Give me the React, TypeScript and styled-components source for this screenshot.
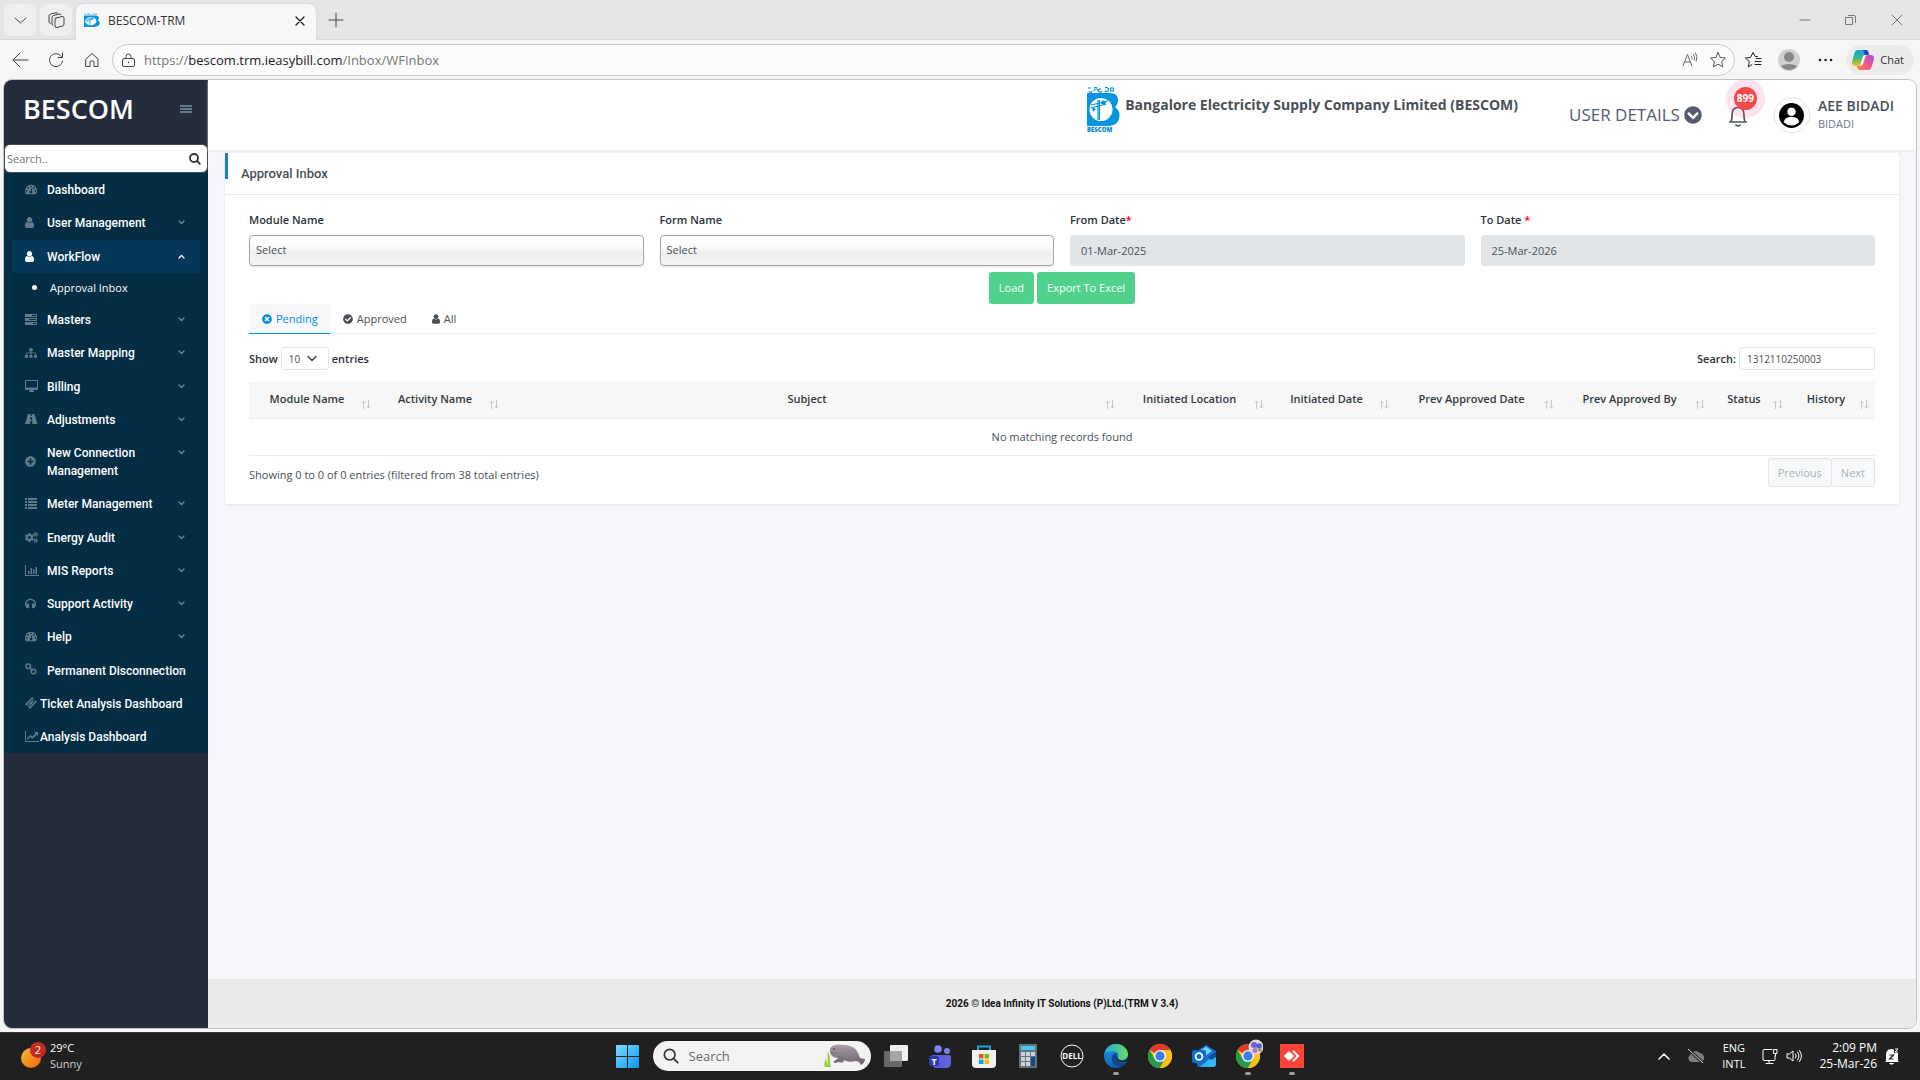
import React from 'react';
import styled, { createGlobalStyle } from 'styled-components';
import { FaSitemap, FaPlusCircle, FaCogs, FaHeadphones, FaTimesCircle, FaCheckCircle, FaChevronCircleDown } from 'react-icons/fa';

const Global = createGlobalStyle`
  * { box-sizing: border-box; }
  html, body { margin: 0; }
  body { font: 400 11px/18px "Open Sans", "Noto Sans", sans-serif; color: #495057; background: #f6f6f6; }
  button, input, select { font: inherit; color: inherit; margin: 0; }
  button { border: 0; padding: 0; background: none; }
  a { color: inherit; text-decoration: none; }
  svg { display: block; flex: none; }
`;

const Screen = styled.div`
  display: flex;
  flex-direction: column;
  min-height: 100vh;
`;

/* ---------- browser chrome ---------- */
const TabStrip = styled.div`
  display: flex;
  align-items: flex-start;
  height: 40px;
  padding: 4px 0 0 4px;
  background: #e5e5e5;
  border-bottom: 1px solid #dadada;
`;
const StripButton = styled.button<{ $plain?: boolean }>`
  display: grid;
  place-items: center;
  width: 32px;
  height: 32px;
  margin-right: 4px;
  border-radius: 8px;
  background: ${p => (p.$plain ? 'transparent' : '#eeeeee')};
`;
const BrowserTab = styled.div`
  display: flex;
  align-items: center;
  gap: 8px;
  width: 240px;
  height: 36px;
  padding: 0 8px 2px;
  margin-right: 4px;
  border-radius: 8px 8px 0 0;
  background: #f7f7f7;
  box-shadow: 0 0 2px #c4c4c4;
  clip-path: inset(-2px -2px 0 -2px);
  font-size: 12px;
  color: #333;
`;
const TabTitle = styled.span`
  flex: 1;
`;
const CloseTab = styled.button`
  display: grid;
  place-items: center;
  width: 16px;
  height: 16px;
`;
const WindowButtons = styled.div`
  display: flex;
  margin-left: auto;
`;
const WindowButton = styled.button`
  display: grid;
  place-items: center;
  width: 46px;
  height: 32px;
`;
const Toolbar = styled.div`
  display: flex;
  align-items: center;
  height: 39px;
  padding: 1px 6px 0 2px;
  background: #f6f6f6;
`;
const ToolButton = styled.button`
  display: grid;
  place-items: center;
  width: 36px;
  height: 32px;
`;
const AddressBar = styled.div`
  display: flex;
  align-items: center;
  flex: 1;
  height: 32px;
  margin-left: 2px;
  padding: 0 2px 0 8px;
  border: 1px solid #cacaca;
  border-radius: 16px;
  background: #fcfcfc;
`;
const Url = styled.span`
  flex: 1;
  margin-left: 8px;
  font-size: 13px;
  color: #767676;
  b { font-weight: 400; color: #1b1b1b; }
`;
const AddressButton = styled.button`
  display: grid;
  place-items: center;
  width: 28px;
  height: 28px;
`;
const ChatButton = styled.button`
  display: flex;
  align-items: center;
  gap: 6px;
  height: 30px;
  margin-left: 3px;
  padding: 0 10px 0 6px;
  border-radius: 15px;
  background: #ebebeb;
  font-size: 11px;
  color: #333;
`;

/* ---------- page frame ---------- */
const Frame = styled.div`
  display: flex;
  flex: 1;
  margin: 0 3px 3px;
  border: 1px solid #c2c2c2;
  border-radius: 9px;
  overflow: hidden;
  background: #f6f7fa;
`;
const Sidebar = styled.aside`
  width: 204px;
  flex: none;
  background: #242c3d;
`;
const Brand = styled.div`
  display: flex;
  align-items: center;
  justify-content: space-between;
  height: 64px;
  padding: 0 16px 6px 19px;
  font-size: 27px;
  font-weight: 600;
  color: #fff;
`;
const SideSearch = styled.label`
  display: flex;
  align-items: center;
  height: 29px;
  padding: 0 6px 0 2px;
  border: 1px solid #4b4b50;
  border-radius: 6px;
  background: #fff;
`;
const SideSearchInput = styled.input`
  flex: 1;
  min-width: 0;
  border: 0;
  padding: 0;
  outline: 0;
  background: none;
  &::placeholder { color: #757575; opacity: 1; }
`;
const Menu = styled.nav`
  display: flex;
  flex-direction: column;
  justify-content: space-between;
  min-height: 580px;
  padding: 0 8px;
  background: #032c45;
  font-family: Roboto, sans-serif;
  font-size: 12px;
  font-weight: 500;
`;
const MenuItem = styled.a<{ $active?: boolean; $tight?: boolean }>`
  display: flex;
  align-items: center;
  gap: ${p => (p.$tight ? 1 : 8)}px;
  min-height: 33px;
  padding: 0 15px 0 13px;
  border-radius: 3px;
  color: #fff;
  background: ${p => (p.$active ? '#053857' : 'transparent')};
`;
const MenuIcon = styled.span<{ $active?: boolean }>`
  width: 14px;
  flex: none;
  color: ${p => (p.$active ? '#fff' : '#5f7b8d')};
`;
const MenuText = styled.span`
  flex: 1;
  min-width: 0;
  padding: 8px 0 7px;
  white-space: nowrap;
`;
const MenuArrow = styled.span<{ $active?: boolean }>`
  display: flex;
  align-items: center;
  align-self: flex-start;
  height: 33px;
  margin-left: -8px;
  color: ${p => (p.$active ? '#fff' : '#6d8797')};
`;
const SubItem = styled.a`
  display: flex;
  align-items: center;
  gap: 13px;
  height: 30px;
  padding-left: 20px;
  color: #fff;
  font: 400 11px/18px "Open Sans", sans-serif;
  &::before { content: ''; width: 5px; height: 5px; border-radius: 50%; background: #fff; }
`;

const Content = styled.div`
  display: flex;
  flex-direction: column;
  flex: 1;
  min-width: 0;
`;
const Header = styled.header`
  display: flex;
  justify-content: flex-end;
  height: 70px;
  padding-right: 22px;
  background: #fff;
  box-shadow: 0 1px 2px #dfe2e6;
`;
const Company = styled.div`
  display: flex;
  gap: 5px;
  margin-right: 51px;
  padding-top: 6px;
  font-size: 14px;
  font-weight: 700;
  line-height: 38px;
  white-space: nowrap;
`;
const UserDetails = styled.button`
  display: flex;
  align-items: center;
  gap: 4px;
  font-size: 17px;
  color: #555b6d;
`;
const Bell = styled.button`
  position: relative;
  display: grid;
  place-items: center;
  width: 26px;
  margin: 0 23px;
  padding-top: 2px;
  color: #4e566b;
`;
const BellBadge = styled.span`
  position: absolute;
  top: 7px;
  left: 9px;
  width: 23px;
  height: 23px;
  border-radius: 50%;
  background: #f44a4a;
  box-shadow: 0 0 0 8px rgba(240, 70, 140, 0.15);
  font-size: 10px;
  font-weight: 700;
  line-height: 22px;
  text-align: center;
  color: #fff;
`;
const Avatar = styled.span`
  display: grid;
  place-items: center;
  align-self: center;
  width: 36px;
  height: 36px;
  margin-right: 8px;
  border: 1px solid #e2e4e8;
  border-radius: 50%;
`;
const UserName = styled.div`
  align-self: center;
  color: #74788d;
  strong { display: block; font-size: 14px; font-weight: 600; color: #495057; }
`;
const Main = styled.main`
  flex: 1;
  padding: 3px 17px 16px;
`;
const Card = styled.section`
  border-radius: 3px;
  background: #fff;
  box-shadow: 0 1px 3px #dfe2e6;
`;
const CardHeader = styled.div`
  display: flex;
  height: 42px;
  border-bottom: 1px solid #ebebed;
  &::before { content: ''; width: 3px; height: 26px; background: #1b82bd; }
`;
const CardTitle = styled.h1`
  margin: 0;
  padding-left: 13px;
  font: 500 13px/41px Roboto, sans-serif;
  color: #495057;
`;
const CardBody = styled.div`
  padding: 16px 24px 17px;
`;
const Filters = styled.div`
  display: grid;
  grid-template-columns: repeat(4, 1fr);
  gap: 16px;
`;
const Field = styled.div`
  display: flex;
  flex-direction: column;
  gap: 6px;
`;
const Label = styled.label`
  font-weight: 600;
  color: #2c3238;
  i { font-style: normal; color: #f00; }
`;
const Picker = styled.select`
  appearance: none;
  height: 31px;
  padding: 0 6px 2px;
  border: 1px solid #a5a5a5;
  border-radius: 4px;
  background: linear-gradient(#fff 20%, #f6f6f6 50%, #eee 52%, #f4f4f4 100%);
  box-shadow: 0 1px 1px #e4e4e4;
`;
const DateInput = styled.input`
  height: 31px;
  width: 100%;
  padding: 0 10px;
  border: 1px solid #e1e5e8;
  border-radius: 3px;
  background: #e1e5e8;
`;
const Actions = styled.div`
  display: flex;
  justify-content: center;
  gap: 3px;
  padding-top: 6px;
`;
const GreenButton = styled.button`
  height: 32px;
  padding: 0 10px;
  border-radius: 3px;
  background: #51d28c;
  color: #fff;
`;
const Tabs = styled.div`
  display: flex;
  height: 30px;
  border-bottom: 1px solid #ebedf0;
`;
const Tab = styled.button<{ $active?: boolean }>`
  display: flex;
  align-items: center;
  gap: 4px;
  height: 30px;
  padding: 0 12px 0 13px;
  border-bottom: 1px solid ${p => (p.$active ? '#038edc' : 'transparent')};
  background: ${p => (p.$active ? '#f6f8fa' : 'transparent')};
  color: ${p => (p.$active ? '#038edc' : '#495057')};
  font-weight: 500;
`;
const TableTools = styled.div`
  display: flex;
  justify-content: space-between;
  margin: 13px 0 11px;
`;
const ToolLabel = styled.label`
  display: flex;
  align-items: center;
  gap: 3px;
  height: 23px;
  font-weight: 600;
  color: #2c3238;
`;
const SelectWrap = styled.span`
  display: grid;
  align-items: center;
  > * { grid-area: 1 / 1; }
  svg { justify-self: end; margin-right: 12px; pointer-events: none; }
`;
const SmallSelect = styled.select`
  appearance: none;
  width: 48px;
  height: 23px;
  padding: 0 7px;
  border: 1px solid #e2e5e8;
  border-radius: 3px;
  background: #fff;
  font-size: 10px;
  font-weight: 400;
  color: #495057;
`;
const SmallInput = styled.input`
  width: 136px;
  height: 23px;
  padding: 0 7px;
  border: 1px solid #e2e5e8;
  border-radius: 3px;
  font-size: 10px;
  font-weight: 400;
  color: #495057;
`;
const Table = styled.table`
  width: 100%;
  table-layout: fixed;
  border-collapse: separate;
  border-spacing: 0;
`;
const Th = styled.th<{ $width?: number }>`
  position: relative;
  width: ${p => (p.$width ? p.$width + 'px' : 'auto')};
  height: 38px;
  padding: 0 25px 1px 13px;
  border-bottom: 1px solid #ebedf0;
  background: #f7f7f7;
  font-weight: 600;
  color: #343a40;
  white-space: nowrap;
  svg { position: absolute; right: 6px; bottom: 9px; }
`;
const EmptyCell = styled.td`
  height: 37px;
  padding: 0;
  border-bottom: 1px solid #ebedf0;
  text-align: center;
`;
const TableFooter = styled.div`
  display: flex;
  justify-content: space-between;
  align-items: center;
  margin-top: 2px;
  height: 29px;
`;
const Info = styled.span`
  padding-top: 4px;
`;
const Pager = styled.div`
  display: flex;
`;
const PageButton = styled.button`
  height: 29px;
  padding: 0 9px;
  border: 1px solid #e2e5e8;
  border-radius: 3px;
  background: #f8f9fb;
  color: #abb1b8;
  & + & { margin-left: -1px; }
`;
const PageFooter = styled.footer`
  height: 49px;
  background: #eaeaea;
  font: 700 10px/49px Roboto, sans-serif;
  text-align: center;
  color: #111;
`;

/* ---------- taskbar ---------- */
const Taskbar = styled.div`
  display: grid;
  grid-template-columns: 1fr auto 1fr;
  align-items: center;
  height: 48px;
  padding: 0 21px 1px 20px;
  border-top: 1px solid #3c3c3c;
  background: #202020;
  color: #fff;
`;
const Weather = styled.button`
  display: flex;
  align-items: center;
  gap: 4px;
  text-align: left;
  line-height: 16px;
  span { display: block; color: #cfcfcf; }
`;
const Apps = styled.div`
  display: flex;
  align-items: center;
`;
const AppButton = styled.button<{ $running?: boolean }>`
  display: grid;
  place-items: center;
  position: relative;
  width: 44px;
  height: 46px;
  &::after {
    content: '';
    display: ${p => (p.$running ? 'block' : 'none')};
    position: absolute;
    bottom: 4px;
    width: 6px;
    height: 3px;
    border-radius: 2px;
    background: #9d9d9d;
  }
`;
const TaskSearch = styled.label`
  display: flex;
  align-items: center;
  gap: 10px;
  width: 218px;
  height: 30px;
  margin: 0 3px;
  padding: 0 5px 0 10px;
  border-radius: 15px;
  background: #f3f3f3;
`;
const TaskSearchInput = styled.input`
  flex: 1;
  min-width: 0;
  padding: 0;
  border: 0;
  outline: 0;
  background: none;
  font-size: 13px;
  &::placeholder { color: #686868; opacity: 1; }
`;
const Tray = styled.div`
  display: flex;
  align-items: center;
  justify-content: flex-end;
`;
const TrayButton = styled.button<{ $gap?: number }>`
  margin-right: ${p => p.$gap || 0}px;
  line-height: 16px;
  text-align: center;
`;
const Clock = styled.button`
  margin: 0 8px 0 16px;
  font-size: 12px;
  line-height: 16px;
  text-align: right;
`;

/* ---------- icons ---------- */
const Line = ({ d, w = 16, h = w, s = 1, c = '#444' }: { d: string; w?: number; h?: number; s?: number; c?: string }) => (
  <svg width={w} height={h} viewBox={`0 0 ${w} ${h}`} fill="none" stroke={c} strokeWidth={s} strokeLinecap="round" strokeLinejoin="round"><path d={d} /></svg>
);
const UserIcon = ({ size = 12 }: { size?: number }) => (
  <svg width={Math.round(size * 0.8)} height={size} viewBox="0 128 1280 1536" fill="currentColor">
    <path d="M1280 1399q0 109-62.5 187t-150.5 78H213Q125 1664 62.5 1586T0 1399q0-85 8.5-160.5T40 1086.5t58.5-131 94-89T327 832q131 128 313 128t313-128q76 0 134.5 34.5t94 89 58.5 131 31.5 152.5 8.5 160.5zm-256-887q0 159-112.5 271.5T640 896 368.5 783.5 256 512t112.5-271.5T640 128t271.5 112.5T1024 512z" />
  </svg>
);
const GaugeIcon = () => (
  <svg width="12" height="11" viewBox="0 192 1792 1536" fill="currentColor">
    <path d="M384 1152q0-53-37.5-90.5T256 1024t-90.5 37.5T128 1152t37.5 90.5T256 1280t90.5-37.5T384 1152zm192-448q0-53-37.5-90.5T448 576t-90.5 37.5T320 704t37.5 90.5T448 832t90.5-37.5T576 704zm428 481l101-382q6-26-7.5-48.5T1059 725t-48 6.5-30 39.5l-101 382q-60 5-107 43.5t-63 98.5q-20 77 20 146t117 89 146-20 89-117q16-60-6-117t-72-91zm660-33q0-53-37.5-90.5T1536 1024t-90.5 37.5-37.5 90.5 37.5 90.5 90.5 37.5 90.5-37.5 37.5-90.5zM1024 512q0-53-37.5-90.5T896 384t-90.5 37.5T768 512t37.5 90.5T896 640t90.5-37.5T1024 512zm448 192q0-53-37.5-90.5T1344 576t-90.5 37.5T1216 704t37.5 90.5T1344 832t90.5-37.5T1472 704zm320 448q0 261-141 483-19 29-54 29H195q-35 0-54-29Q0 1414 0 1152q0-182 71-348t191-286 286-191 348-71 348 71 286 191 191 286 71 348z" />
  </svg>
);
const Glyph = ({ d, w = 13, h = 12 }: { d: string; w?: number; h?: number }) => (
  <svg width={w} height={h} viewBox={`0 0 ${w} ${h}`} fill="currentColor"><path fillRule="evenodd" d={d} /></svg>
);
const TasksIcon = () => <Glyph h={11} d="M0 0h12v3H0zM7 1v1h4V1zM0 4h12v3H0zM4 5v1h7V5zM0 8h12v3H0zM8 9v1h3V9z" />;
const DesktopIcon = () => <Glyph d="M1 0h11a1 1 0 0 1 1 1v8a1 1 0 0 1-1 1H8v1h1v1H4v-1h1v-1H1a1 1 0 0 1-1-1V1a1 1 0 0 1 1-1zM1 1v6.500h11V1z" />;
const RoadIcon = () => <Glyph h={10} d="M3 0h2.800l-.2 2h1.300L6.700 0H9.500L12.500 10H7.400L7.200 7H5.300l-.2 3H0zM5.600 3l-.2 3h1.800L7 3z" />;
const ListIcon = () => <Glyph h={11} d="M0 0h2v2H0zM3 0h9v2H3zM0 3h2v2H0zM3 3h9v2H3zM0 6h2v2H0zM3 6h9v2H3zM0 9h2v2H0zM3 9h9v2H3z" />;
const BarsIcon = () => <Glyph w={14} h={11} d="M0 0h1v10h13v1H0zM3 6h1.500v3H3zM5.500 3H7v6H5.500zM8 4.500h1.500V9H8zM10.500 2H12v7h-1.500z" />;
const TicketIcon = () => <Glyph w={12} h={12} d="M7.200 0l1.300 1.300a1.600 1.600 0 0 0 2.200 2.200L12 4.800 4.800 12l-1.300-1.300a1.600 1.600 0 0 0-2.200-2.200L0 7.200zM7.200 2.200L2.500 6.900l2.600 2.600 4.700-4.700zM7.200 3.200l1.600 1.600-3.700 3.700-1.600-1.600z" />;
const TrendIcon = () => (
  <svg width="14" height="11" viewBox="0 0 14 11" fill="none" stroke="currentColor"><path d="M.5 0v10.500H14" /><path d="M2.500 8l3-3.200 2 2L11.500 2.600" strokeWidth="1.600" /><path d="M9 1h4v4z" fill="currentColor" stroke="none" /></svg>
);
const ChainIcon = () => (
  <svg width="12" height="15" viewBox="0 0 12 15" fill="none" stroke="currentColor" strokeWidth="1.500"><circle cx="3.200" cy="3.200" r="2.300" /><circle cx="8.500" cy="8.500" r="2.300" /><path d="M4.500 4.500l3 3" /></svg>
);
const SortIcon = () => (
  <svg width="10" height="9" viewBox="0 0 10 9" fill="none" stroke="#c6c8ca"><path d="M2.500 9V1M.8 2.800L2.500 1l1.700 1.800M7.500 0v8M5.800 6.200L7.500 8l1.700-1.800" /></svg>
);
const Magnifier = ({ size = 12, color = '#333', s = 1.8 }: { size?: number; color?: string; s?: number }) => (
  <svg width={size} height={size} viewBox="0 0 12 12" fill="none" stroke={color} strokeWidth={s}><circle cx="5" cy="5" r="4" /><path d="M8 8l3.400 3.400" /></svg>
);
const BescomLogo = ({ small }: { small?: boolean }) => (
  <svg width={small ? 16 : 33} height={small ? 16 : 46} viewBox="0 0 33 46" preserveAspectRatio="none">
    <g fill="none" stroke="#0b93dd" strokeWidth="1.200"><path d="M1 2h3M2 5a1.500 1.500 0 1 0 3 0M7 1.500h3M7 5c0-3 4-3 4 0M14 3a1.700 1.700 0 1 0 1 2M18 2a2 2 0 1 1 0 3" /><circle cx="25" cy="3.500" r="1.700" /></g>
    <path d="M0 7h22c7 0 9 3 9 7 0 3-1 5-3 7 3 2 4.500 5 4.500 8 0 7-4 11-12 11H0z" fill="#0596de" />
    <ellipse cx="14" cy="23.500" rx="11.500" ry="11.500" fill="#fff" />
    <path d="M11 14v20M12.500 14v20M4 19l17-4M3.500 22l16-4" stroke="#0596de" strokeWidth="1.200" />
    <path d="M15 14l4 2-1 3-4-1zM5 21l4 2-3 3z" fill="#0596de" />
    {!small && <text x="0" y="45.500" fontFamily="Open Sans" fontSize="6" fontWeight="800" fill="#0b86cc">BESCOM</text>}
  </svg>
);
const Person = () => (
  <svg width="25" height="25" viewBox="0 0 25 25"><circle cx="12.500" cy="12.500" r="12.500" fill="#000" /><path d="M5 19.500c0-4 3-5.500 7.500-5.500s7.500 1.500 7.500 5.500a11 11 0 0 1-15 0z" fill="#fff" /><circle cx="12.500" cy="8.800" r="4.600" fill="#fff" stroke="#000" strokeWidth=".8" /></svg>
);
const BellIcon = () => (
  <svg width="22" height="22" viewBox="0 0 22 22" fill="none" stroke="currentColor" strokeWidth="1.700"><path d="M2 17h18M4 17c1-2 1-4 1-7 0-5 2-7.500 6-7.500s6 2.500 6 7.500c0 3 0 5 1 7" /><path d="M8.500 19.500c.6 1.800 4.400 1.800 5 0" /></svg>
);
const Profile = () => (
  <svg width="22" height="22" viewBox="0 0 22 22"><circle cx="11" cy="11" r="11" fill="#d2d0ce" /><circle cx="11" cy="8" r="5" fill="#8a8886" /><path d="M3 17.500c2-3.500 14-3.500 16 0a11 11 0 0 1-16 0z" fill="#8a8886" /></svg>
);
const Copilot = () => (
  <svg width="22" height="20" viewBox="0 0 22 20">
    <defs>
      <linearGradient id="cpA" x1="0" y1="0" x2="0" y2="1"><stop offset="0" stopColor="#14a0ea" /><stop offset=".5" stopColor="#39b87f" /><stop offset="1" stopColor="#f0c419" /></linearGradient>
      <linearGradient id="cpB" x1="1" y1="0" x2="0" y2="1"><stop offset="0" stopColor="#a94fe6" /><stop offset=".5" stopColor="#f0568b" /><stop offset="1" stopColor="#ff8a3c" /></linearGradient>
    </defs>
    <path d="M6 0h8c2 0 2.500 2 3 5h-3c-2 0-3 1-3.500 3L9 13c-.5 2-1.500 3-3.500 3H3c-3 0-3.500-3-2.500-6l2-7C3 1 4 0 6 0z" fill="url(#cpA)" />
    <path d="M16 20H8c-2 0-2.500-2-3-4h3c2 0 3-1 3.500-3L13 8c.5-2 1.500-3 3.500-3H19c3 0 3.500 3 2.500 6l-2 6c-.5 2-1.500 3-3.500 3z" fill="url(#cpB)" />
    <path d="M11 0h3c2 0 2.500 2 3 5h-3l-1-.1C12 3 12 1.500 11 0z" fill="#1a49c9" />
    <path d="M9 14.500c1-1 1.500-2 2-4l1-3.500c.3-1 .7-1.500 1.500-2-1.500 0-2.500 1-3 3L9 13z" fill="#fff" />
  </svg>
);
const StarPath = 'M9 1.500l2.200 4.900 5.300.6-3.900 3.600 1.100 5.300L9 13.200l-4.700 2.700 1.100-5.300L1.500 7l5.300-.6z';
const WeatherIcon = () => (
  <svg width="26" height="28" viewBox="0 0 26 28">
    <defs><linearGradient id="sun" x1="0" y1="0" x2="1" y2="1"><stop offset="0" stopColor="#f6bd3b" /><stop offset="1" stopColor="#f2630b" /></linearGradient></defs>
    <circle cx="11" cy="16" r="10" fill="url(#sun)" /><circle cx="18" cy="8" r="8" fill="#c42b1c" />
    <text x="18" y="12" fontFamily="Open Sans" fontSize="11" fill="#fff" textAnchor="middle">2</text>
  </svg>
);
const StartIcon = () => (
  <svg width="23" height="23" viewBox="0 0 23 23"><defs><linearGradient id="win" x1="0" y1="0" x2="1" y2="1"><stop offset="0" stopColor="#7fdcff" /><stop offset="1" stopColor="#0a95f2" /></linearGradient></defs><path d="M0 1q0-1 1-1h10v11H0zM12 0h10q1 0 1 1v10H12zM0 12h11v11H1q-1 0-1-1zM12 12h11v10q0 1-1 1H12z" fill="url(#win)" /></svg>
);
const Manatee = () => (
  <svg width="42" height="24" viewBox="0 0 42 24">
    <defs><linearGradient id="man" x1="0" y1="0" x2="0" y2="1"><stop offset="0" stopColor="#aaa0a9" /><stop offset="1" stopColor="#6c606c" /></linearGradient></defs>
    <path d="M6 5C8 0 15 0 20 1c9 0 14 5 16 13l5 1c0 3-2 5-4 6-1-2-3-4-5-4-5 1-9 1-12-1 0 3-3 3-5 2l-4 1c-2 0-1-3 1-3l2-2c-5 0-9-4-8-9z" fill="url(#man)" />
    <circle cx="10" cy="5" r=".8" fill="#222" /><path d="M7 8c2 2 4 2 6 0" stroke="#665b66" strokeWidth=".7" fill="none" />
    <path d="M1 23c-2-4 1-5 0-8 3 1 1 4 3 5 0-4-1-7 0-12 3 4 1 8 3 15z" fill="#9ccb3b" />
  </svg>
);
const TaskView = () => (
  <svg width="24" height="22" viewBox="0 0 24 22"><rect x="6" width="18" height="16" rx="1" fill="#efefef" /><rect y="6" width="18" height="16" rx="1" fill="#696969" /><path d="M6 6h12v10H6z" fill="#a6a6a6" /></svg>
);
const Teams = () => (
  <svg width="22" height="23" viewBox="0 0 22 23"><circle cx="9" cy="4" r="3.800" fill="#7f85f5" /><circle cx="18" cy="6" r="3" fill="#7b83eb" /><path d="M13 10h7q2 0 2 2v6c0 3-2 5-5 5h-4z" fill="#6264d8" /><path d="M3 10h11q2 0 2 2v6c0 3-2 5-5 5H8c-3 0-5-2-5-5z" fill="#5a5fe6" /><rect y="11" width="10" height="10" rx="2" fill="#3238a8" /><text x="5" y="19.500" fontFamily="Open Sans" fontSize="9" fontWeight="700" fill="#fff" textAnchor="middle">T</text></svg>
);
const Store = () => (
  <svg width="24" height="23" viewBox="0 0 24 23"><path d="M6 6V1.500h12V6" fill="none" stroke="#1ba1e2" strokeWidth="2" /><path d="M0 5h24v14q0 4-4 4H4q-4 0-4-4z" fill="#f0f0f0" /><path d="M7 9h4.500v4.500H7z" fill="#f25022" /><path d="M12.500 9H17v4.500h-4.500z" fill="#7fba00" /><path d="M7 14.500h4.500V19H7z" fill="#00a4ef" /><path d="M12.500 14.500H17V19h-4.500z" fill="#ffb900" /></svg>
);
const Calculator = () => (
  <svg width="18" height="24" viewBox="0 0 18 24"><rect width="18" height="24" rx="1" fill="#67737c" /><rect x="2" y="2" width="14" height="4" fill="#4cc8f0" /><path d="M2 8h4v4H2zM7 8h4v4H7zM12 8h4v4h-4zM2 13h4v4H2zM7 13h4v4H7zM2 18h4v4H2zM7 18h4v4H7z" fill="#ccd4da" /><path d="M12 13h4v9h-4z" fill="#0f4a8a" /></svg>
);
const Dell = () => (
  <svg width="24" height="24" viewBox="0 0 24 24"><circle cx="12" cy="12" r="11" fill="none" stroke="#fff" /><text x="12" y="15" fontFamily="Open Sans" fontSize="8" fontWeight="700" fill="#fff" textAnchor="middle">DELL</text></svg>
);
const Edge = () => (
  <svg width="24" height="24" viewBox="0 0 24 24">
    <defs><linearGradient id="edA" x1="0" y1="0" x2="1" y2="0"><stop offset="0" stopColor="#22a7df" /><stop offset="1" stopColor="#63df5b" /></linearGradient><linearGradient id="edB" x1="0" y1="0" x2="0" y2="1"><stop offset="0" stopColor="#1b9de0" /><stop offset="1" stopColor="#1261b8" /></linearGradient></defs>
    <circle cx="12" cy="12" r="12" fill="url(#edB)" />
    <path d="M.5 9C2 3 7 0 12 0c7 0 12 5 12 10 0 4-3 6-6 6-3 0-5-1-4-3 1-3-1-6-5-6-3 0-7 1-8.500 2z" fill="url(#edA)" />
    <path d="M8 12c-2 6 3 11 8 11 3-1 5-3 6.500-5-4 2-9 1-9-4-1-2-1-3-.5-5-2 0-4 1-5 3z" fill="#11478f" /><path d="M13.500 13c-2 3 3 7 9 4.500l1.500-2V11c0 4-3 5.500-6 5.500-2.500 0-4-1-4.500-3.500z" fill="#202020" />
  </svg>
);
const Chrome = ({ badge }: { badge?: boolean }) => (
  <svg width="30" height="34" viewBox="-3 -5 30 34">
    <circle cx="12" cy="12" r="12" fill="#fbc116" /><path d="M12 12L1.600 6A12 12 0 0 1 22.400 6H12z" fill="#e33b2e" /><path d="M1.600 6A12 12 0 0 0 12 24l5.200-9L12 12 6.800 15z" fill="#269b4b" /><path d="M22.400 6H12v6z" fill="#e33b2e" /><path d="M22.400 6H12l5.200 9L12 24A12 12 0 0 0 22.400 6z" fill="#fbc116" />
    <circle cx="12" cy="12" r="6" fill="#fff" /><circle cx="12" cy="12" r="4.700" fill="#3b7ded" />
    {badge && <g><circle cx="20" cy="3" r="7.500" fill="#ecd3d6" /><circle cx="18" cy="1" r="3" fill="#5b6ad0" /><circle cx="23" cy="2" r="2.800" fill="#4e62c9" /><circle cx="19" cy="6.500" r="2.500" fill="#b078c9" /><circle cx="24" cy="6" r="1.800" fill="#7f9a62" /></g>}
  </svg>
);
const Outlook = () => (
  <svg width="24" height="22" viewBox="0 0 24 22"><path d="M5 6l9-6 10 6v12q0 4-4 4H8q-3 0-3-3z" fill="#1a6fd0" /><path d="M9 5l5-3.500L20 6l-8 6z" fill="#6fd0fa" /><path d="M24 8v11q0 3-3 3H8z" fill="#36b3f1" /><path d="M16 12l8-5v5l-5 3z" fill="#0c4aa0" /><rect y="5" width="14" height="13" rx="2" fill="#0f6cc9" /><circle cx="7" cy="11.500" r="3.400" fill="none" stroke="#fff" strokeWidth="1.800" /></svg>
);
const AnyDesk = () => (
  <svg width="24" height="24" viewBox="0 0 24 24"><path d="M0 0h24v24H0z" fill="#ff4438" /><path d="M4 12l5-5 5 5-5 5z" fill="#fff" /><path d="M13 7l5 5-5 5" fill="none" stroke="#fff" strokeWidth="2" /></svg>
);
const CloudOff = () => (
  <svg width="18" height="16" viewBox="0 0 18 16"><path d="M4 14a4 4 0 0 1-1-7 6 6 0 0 1 10-2 5 5 0 0 1 2 9z" fill="#7c7c7c" /><path d="M1 1l15 14" stroke="#202020" strokeWidth="3" /><path d="M1 1l15 14" stroke="#ddd" /></svg>
);
const DndBell = () => (
  <svg width="14" height="17" viewBox="0 0 14 17"><path d="M1 13V6a5.500 5.500 0 0 1 8-4.500V5h4v8l1 1H0zM4 15h5c-1 2-4 2-5 0z" fill="#fff" /><path d="M4.500 7h4l-4 4h4M10 1h3l-3 3h3" fill="none" stroke="#202020" strokeWidth="1.200" /><path d="M10 1h3l-3 3h3" fill="none" stroke="#fff" /></svg>
);

const downPath = 'M1 1l2.500 2.500L6 1';
const upPath = 'M1 4l2.500-2.500L6 4';

type Entry = { text: React.ReactNode; icon: React.ReactNode; arrow?: boolean; active?: boolean; tight?: boolean; sub?: string };
const menu: Entry[] = [
  { text: 'Dashboard', icon: <GaugeIcon /> },
  { text: 'User Management', icon: <UserIcon size={11} />, arrow: true },
  { text: 'WorkFlow', icon: <UserIcon size={11} />, arrow: true, active: true, sub: 'Approval Inbox' },
  { text: 'Masters', icon: <TasksIcon />, arrow: true },
  { text: 'Master Mapping', icon: <FaSitemap size={12} />, arrow: true },
  { text: 'Billing', icon: <DesktopIcon />, arrow: true },
  { text: 'Adjustments', icon: <RoadIcon />, arrow: true },
  { text: <>New Connection<br />Management</>, icon: <FaPlusCircle size={11} />, arrow: true },
  { text: 'Meter Management', icon: <ListIcon />, arrow: true },
  { text: 'Energy Audit', icon: <FaCogs size={13} />, arrow: true },
  { text: 'MIS Reports', icon: <BarsIcon />, arrow: true },
  { text: 'Support Activity', icon: <FaHeadphones size={11} />, arrow: true },
  { text: 'Help', icon: <GaugeIcon />, arrow: true },
  { text: 'Permanent Disconnection', icon: <ChainIcon />, arrow: true },
  { text: 'Ticket Analysis Dashboard', icon: <TicketIcon />, tight: true },
  { text: 'Analysis Dashboard', icon: <TrendIcon />, tight: true },
];
const columns: [string, number?][] = [
  ['Module Name', 128], ['Activity Name', 128], ['Subject'], ['Initiated Location', 149], ['Initiated Date', 125],
  ['Prev Approved Date', 165], ['Prev Approved By', 151], ['Status', 78], ['History', 86],
];

export default function App() {
  return (
    <Screen>
      <Global />
      <TabStrip>
        <StripButton aria-label="Tab actions"><Line d="M3 6l5.500 5L14 6" w={17} /></StripButton>
        <StripButton aria-label="Workspaces"><Line d="M8 6l6-1.500q2-.3 2 1.500v6q0 1.500-1.500 2l-5.500 1.500q-2 .3-2-1.500V7.500Q7 6.300 8 6zM5 13.500q-1-.3-1-1.500V5.500Q4 4 5.500 3.500L11 2q1.500-.3 2 .8M2.300 11.500Q1 11 1 10V4q0-1.500 1.500-2L8 .8q1-.2 1.500.2" w={17} /></StripButton>
        <BrowserTab>
          <BescomLogo small />
          <TabTitle>BESCOM-TRM</TabTitle>
          <CloseTab aria-label="Close tab"><Line d="M4 4l8 8M12 4l-8 8" s={1.400} c="#222" /></CloseTab>
        </BrowserTab>
        <StripButton $plain aria-label="New tab"><Line d="M8 1v14M1 8h14" /></StripButton>
        <WindowButtons>
          <WindowButton aria-label="Minimise"><Line d="M1 8h10" w={12} h={16} c="#777" /></WindowButton>
          <WindowButton aria-label="Restore"><Line d="M1.500 3.500h6v7h-7v-7zM3.500 1.500h5.500q1.500 0 1.500 1.500v5.500" w={12} c="#777" /></WindowButton>
          <WindowButton aria-label="Close"><Line d="M1 1l10 10M11 1L1 11" w={12} c="#777" /></WindowButton>
        </WindowButtons>
      </TabStrip>
      <Toolbar>
        <ToolButton aria-label="Back"><Line d="M16 8H1M8 1L1 8l7 7" w={17} /></ToolButton>
        <ToolButton aria-label="Refresh"><Line d="M14 5.500A6.500 6.500 0 1 0 14.500 9M14.500 1v4.500H10" w={16} /></ToolButton>
        <ToolButton aria-label="Home"><Line d="M2 7l6-5.500L14 7v7.500h-4V10q0-1-1-1H7q-1 0-1 1v4.500H2z" w={16} /></ToolButton>
        <AddressBar>
          <Line d="M3 5.500h9q1.500 0 1.500 1.500v5q0 1.500-1.500 1.500H3q-1.500 0-1.500-1.500V7q0-1.500 1.500-1.500zM5 5.500V3.500q0-2.500 2.500-2.500T10 3.500v2M7.500 9.200v.6" w={15} />
          <Url>https://<b>bescom.trm.ieasybill.com</b>/Inbox/WFInbox</Url>
          <AddressButton aria-label="Read aloud"><Line d="M1 14L5.500 2.500 10 14M2.700 10h5.600M9.500 4q1 1.500.5 3M11.500 2.500q2 2.500.8 5.500M13.500 1q2.500 3.500.8 8" w={16} c="#666" /></AddressButton>
          <AddressButton aria-label="Add to favourites"><Line d={StarPath} w={18} c="#555" /></AddressButton>
        </AddressBar>
        <ToolButton aria-label="Favourites"><Line d="M13.500 5.500h-2.300L9 1.500 6.500 6.400 1.500 7l3.900 3.600-1.100 5.300L8 13.500M12 7.500h5M11 10.500h6M11 13.500h6" w={18} c="#222" /></ToolButton>
        <ToolButton aria-label="Profile"><Profile /></ToolButton>
        <ToolButton aria-label="Settings"><Line d="M2 4h.1M7.500 4h.1M13 4h.1" w={15} h={8} s={2.500} c="#222" /></ToolButton>
        <ChatButton><Copilot />Chat</ChatButton>
      </Toolbar>

      <Frame>
        <Sidebar>
          <Brand>BESCOM<Line d="M0 1h12M0 4h12M0 7h12" w={12} h={8} s={1.500} c="#7894a3" /></Brand>
          <SideSearch><SideSearchInput aria-label="Search menu" placeholder="Search.." /><Magnifier /></SideSearch>
          <Menu>
            {menu.map((m, i) => (
              <React.Fragment key={i}>
                <MenuItem href="#" $active={m.active} $tight={m.tight}>
                  <MenuIcon $active={m.active}>{m.icon}</MenuIcon>
                  <MenuText>{m.text}</MenuText>
                  {m.arrow && <MenuArrow $active={m.active}><Line d={m.active ? upPath : downPath} w={7} h={5} s={1.300} c="currentColor" /></MenuArrow>}
                </MenuItem>
                {m.sub && <SubItem href="#">{m.sub}</SubItem>}
              </React.Fragment>
            ))}
          </Menu>
        </Sidebar>
        <Content>
          <Header>
            <Company><BescomLogo />Bangalore Electricity Supply Company Limited (BESCOM)</Company>
            <UserDetails>USER DETAILS<FaChevronCircleDown size={18} /></UserDetails>
            <Bell aria-label="Notifications"><BellIcon /><BellBadge>899</BellBadge></Bell>
            <Avatar><Person /></Avatar>
            <UserName><strong>AEE BIDADI</strong>BIDADI</UserName>
          </Header>
          <Main>
            <Card>
              <CardHeader><CardTitle>Approval Inbox</CardTitle></CardHeader>
              <CardBody>
                <Filters>
                  <Field><Label htmlFor="module">Module Name</Label><Picker id="module"><option>Select</option></Picker></Field>
                  <Field><Label htmlFor="form">Form Name</Label><Picker id="form"><option>Select</option></Picker></Field>
                  <Field><Label htmlFor="from">From Date<i>*</i></Label><DateInput id="from" readOnly value="01-Mar-2025" /></Field>
                  <Field><Label htmlFor="to">To Date <i>*</i></Label><DateInput id="to" readOnly value="25-Mar-2026" /></Field>
                </Filters>
                <Actions><GreenButton>Load</GreenButton><GreenButton>Export To Excel</GreenButton></Actions>
                <Tabs>
                  <Tab $active><FaTimesCircle size={10} />Pending</Tab>
                  <Tab><FaCheckCircle size={10} />Approved</Tab>
                  <Tab><UserIcon size={10} />All</Tab>
                </Tabs>
                <TableTools>
                  <ToolLabel>Show
                    <SelectWrap><SmallSelect><option>10</option></SmallSelect><Line d="M1 1.500l4 4 4-4" w={10} h={7} s={1.400} /></SelectWrap>
                    entries
                  </ToolLabel>
                  <ToolLabel>Search:<SmallInput defaultValue="1312110250003" /></ToolLabel>
                </TableTools>
                <Table>
                  <thead><tr>{columns.map(([name, width]) => <Th key={name} $width={width}>{name}<SortIcon /></Th>)}</tr></thead>
                  <tbody><tr><EmptyCell colSpan={9}>No matching records found</EmptyCell></tr></tbody>
                </Table>
                <TableFooter>
                  <Info>Showing 0 to 0 of 0 entries (filtered from 38 total entries)</Info>
                  <Pager><PageButton>Previous</PageButton><PageButton>Next</PageButton></Pager>
                </TableFooter>
              </CardBody>
            </Card>
          </Main>
          <PageFooter>2026 © Idea Infinity IT Solutions (P)Ltd.(TRM V 3.4)</PageFooter>
        </Content>
      </Frame>

      <Taskbar>
        <Weather><WeatherIcon /><div>29°C<span>Sunny</span></div></Weather>
        <Apps>
          <AppButton aria-label="Start"><StartIcon /></AppButton>
          <TaskSearch><Magnifier size={16} s={1.300} /><TaskSearchInput aria-label="Search" placeholder="Search" /><Manatee /></TaskSearch>
          <AppButton aria-label="Task view"><TaskView /></AppButton>
          <AppButton aria-label="Teams"><Teams /></AppButton>
          <AppButton aria-label="Store"><Store /></AppButton>
          <AppButton aria-label="Calculator"><Calculator /></AppButton>
          <AppButton aria-label="Dell"><Dell /></AppButton>
          <AppButton aria-label="Edge" $running><Edge /></AppButton>
          <AppButton aria-label="Chrome"><Chrome /></AppButton>
          <AppButton aria-label="Outlook"><Outlook /></AppButton>
          <AppButton aria-label="Chrome profile" $running><Chrome badge /></AppButton>
          <AppButton aria-label="AnyDesk" $running><AnyDesk /></AppButton>
        </Apps>
        <Tray>
          <TrayButton $gap={17} aria-label="Hidden icons"><Line d="M1 6l5-5 5 5" w={12} h={7} s={1.500} c="#fff" /></TrayButton>
          <TrayButton $gap={17} aria-label="OneDrive"><CloudOff /></TrayButton>
          <TrayButton $gap={17}>ENG<br />INTL</TrayButton>
          <TrayButton $gap={7} aria-label="Network"><Line d="M10 1.500H2q-1 0-1 1V11q0 1.500 1 1.500h10q1 0 1-1V8M4 15.500h7M7 12.500v3M12 1.500h3v4h-3zM13.500 5.500V8" w={17} c="#fff" /></TrayButton>
          <TrayButton aria-label="Volume"><Line d="M1 6v4h2.500L7 13V3L3.500 6zM9.500 6q1.500 2 0 4M11.500 4q3 4 0 8M13.500 2.500q4 5.500 0 11" w={17} c="#fff" /></TrayButton>
          <Clock>2:09 PM<br />25-Mar-26</Clock>
          <TrayButton aria-label="Notifications"><DndBell /></TrayButton>
        </Tray>
      </Taskbar>
    </Screen>
  );
}
